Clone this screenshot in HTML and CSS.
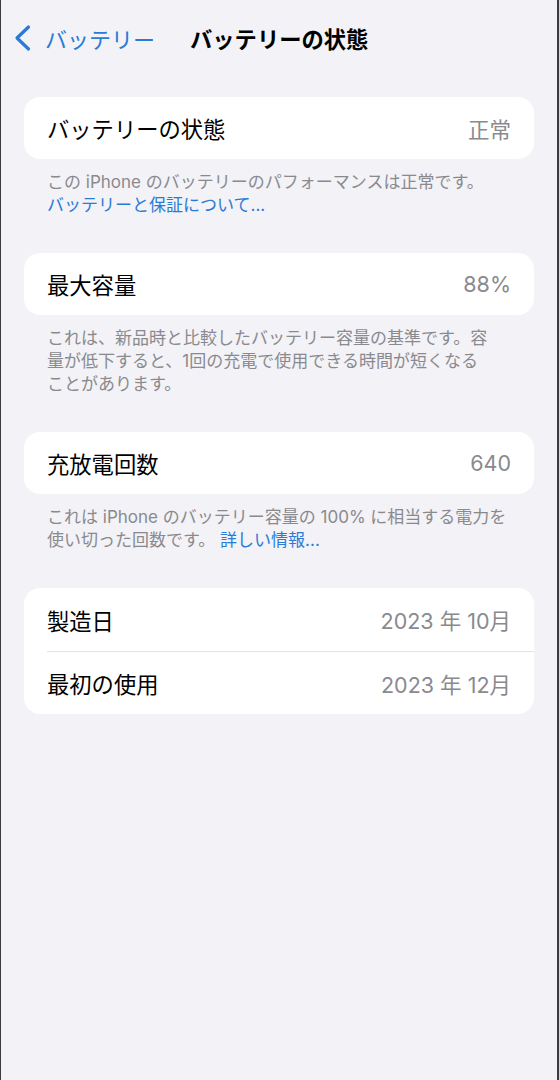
FILE: index.html
```html
<!DOCTYPE html>
<html lang="ja">
<head>
    <meta charset="UTF-8">
    <meta name="viewport" content="width=device-width, initial-scale=1.0">
    <title>バッテリーの状態</title>
    <link rel="stylesheet" href="styles.css">
</head>
<body>
    <div class="screen">
        <!-- ナビゲーションバー -->
        <header class="nav-bar">
            <a class="back-link" href="#">
                <svg class="chevron" width="20" height="28" viewBox="0 0 20 28">
                    <path d="M15.5 3 L4 14 L15.5 25" fill="none" stroke="currentColor" stroke-width="3.2" stroke-linecap="round" stroke-linejoin="round"/>
                </svg>
                <span>バッテリー</span>
            </a>
            <h1 class="nav-title">バッテリーの状態</h1>
        </header>

        <main class="content">
            <!-- バッテリーの状態 -->
            <section class="group">
                <div class="card">
                    <div class="row">
                        <span class="row-label">バッテリーの状態</span>
                        <span class="row-value">正常</span>
                    </div>
                </div>
                <p class="footer">
                    この iPhone のバッテリーのパフォーマンスは正常です。<br>
                    <a class="link" href="#">バッテリーと保証について...</a>
                </p>
            </section>

            <!-- 最大容量 -->
            <section class="group">
                <div class="card">
                    <div class="row">
                        <span class="row-label">最大容量</span>
                        <span class="row-value">88%</span>
                    </div>
                </div>
                <p class="footer">
                    これは、新品時と比較したバッテリー容量の基準です。容<br>
                    量が低下すると、1回の充電で使用できる時間が短くなる<br>
                    ことがあります。
                </p>
            </section>

            <!-- 充放電回数 -->
            <section class="group">
                <div class="card">
                    <div class="row">
                        <span class="row-label">充放電回数</span>
                        <span class="row-value">640</span>
                    </div>
                </div>
                <p class="footer">
                    これは iPhone のバッテリー容量の 100% に相当する電力を<br>
                    使い切った回数です。 <a class="link" href="#">詳しい情報...</a>
                </p>
            </section>

            <!-- 製造日・最初の使用 -->
            <section class="group">
                <div class="card">
                    <div class="row row-tall">
                        <span class="row-label">製造日</span>
                        <span class="row-value">2023 年 10月</span>
                    </div>
                    <div class="row row-tall">
                        <span class="row-label">最初の使用</span>
                        <span class="row-value">2023 年 12月</span>
                    </div>
                </div>
            </section>
        </main>
    </div>
</body>
</html>
```

FILE: styles.css
```css
/* 基本の色とサイズ */
:root {
    --bg-color: #f2f2f7;
    --card-color: #ffffff;
    --text-color: #000000;
    --secondary-color: #8a8a8e;
    --link-color: #2a7ad6;
    --separator-color: #e3e3e7;
    --frame-color: #3c3c40;

    --inset: 23px;
    --radius: 16px;
}

* {
    box-sizing: border-box;
}

body {
    margin: 0;
    background-color: var(--bg-color);
    font-family: "Inter", "Noto Sans CJK JP", sans-serif;
    color: var(--text-color);
}

/* 画面の枠 */
.screen {
    min-height: 1080px;
    border-left: 1px solid var(--frame-color);
    border-right: 2px solid var(--frame-color);
}

/* ナビゲーションバー */
.nav-bar {
    height: 76px;
    display: flex;
    align-items: center;
    padding-left: 12px;
}

.back-link {
    display: flex;
    align-items: center;
    gap: 12px;
    color: var(--link-color);
    text-decoration: none;
    font-size: 22px;
}

.chevron {
    display: block;
}

.nav-title {
    margin: 0 0 0 35px;
    font-size: 22.3px;
    font-weight: 700;
}

/* コンテンツ */
.content {
    padding: 21px 23px 0 23px;
}

.card {
    background-color: var(--card-color);
    border-radius: var(--radius);
    overflow: hidden;
}

.row {
    height: 62px;
    display: flex;
    align-items: center;
    justify-content: space-between;
    padding: 0 var(--inset);
    font-size: 22.3px;
}

.row-tall {
    height: 63px;
}

.row + .row {
    border-top: 1px solid var(--separator-color);
    margin-left: var(--inset);
    padding-left: 0;
}

.row-value {
    color: var(--secondary-color);
    font-size: 21.5px;
}

/* 補足テキスト */
.footer {
    margin: 0;
    padding: 12px var(--inset) 36px;
    font-size: 17px;
    line-height: 23px;
    color: var(--secondary-color);
}

.link {
    color: var(--link-color);
    text-decoration: none;
}
```
